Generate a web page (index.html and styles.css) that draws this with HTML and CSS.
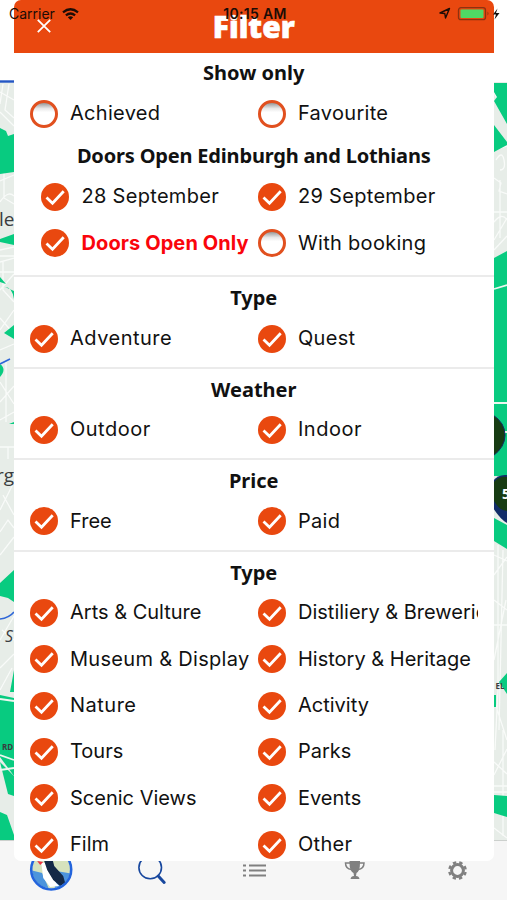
FILE: index.html
```html
<!DOCTYPE html>
<html lang="en">
<head>
<meta charset="utf-8">
<title>Filter</title>
<link rel="stylesheet" href="styles.css">
</head>
<body>
<div class="phone">
  <svg class="map" viewBox="0 0 507 900" aria-hidden="true">
    <rect y="82" width="507" height="758" fill="#e7ede8"/>
    <path d="M0 81.5H14" stroke="#2457c4" stroke-width="2.4"/>
    <g fill="none" stroke="#fbfdfb" stroke-width="1.300" opacity=".85">
      <path d="M0 92l14 8M3 84l-3 20M9 84l-4 26 9 8M0 112l14 14M0 181l14-6M4 172v26l10 6M0 202q8-12 14-6M0 250l14-3M0 256h14M0 262l14-4M0 272h14M0 290l14-16M3 262v28l11 12M0 330l14-20M0 318l14 16M0 350l14-6M0 382l14 22M0 402l14-16M6 362v60M0 420l14-8M0 447h14M8 447v12M0 510l14-28M3 495l11 20M0 532l8-12 6 8M0 555l14-18M0 640l14-24M0 668l14-14M2 630l12 10M0 690l12-22"/>
      <path d="M494 92l13 30M494 150l13-4M496 160q6-10 8 0t-4 10M494 178l7 5-2 8 8 3M494 212h13M500 180v58M494 240l13-22M494 222q8-10 13-2M494 250l13-14M494 555l13 6M494 575l13-18M498 545v140M503 550l-4 180M494 600l13 10M494 625h13M506 600l-12 60M494 700l13 40M498 690l-3 60M494 775l13-26M503 730v106M494 762l13 12M494 786h13M494 792h13M494 828l13 10"/>
    </g>
    <g fill="#08cb80">
      <path d="M0 128l6 3 2 5 6-2v38l-14 2z"/>
      <path d="M0 239l14-5v11l-14-3zM0 277l6 7-6-2zM5 287q7 0 9 12v-8zM4 333l10-8v14zM0 364q7 5 0 13zM9 424l5-2v2z"/>
      <path d="M0 583l14-13v32l-6-4-8-2zM14 670l-4 22h4zM0 695l14 3v78l-14-19z"/>
      <path d="M0 762l14 14v20l-6-2zM0 812l7 3 7 20v5H0z"/>
      <path d="M494 83h13v41l-13-23 3-4-3-5zM494 125l13 17v3l-13 7zM494 258l13-7v150h-13zM494 400h13v76h-13zM494 518l13 7v24l-13-8zM507 673l-8 9 8 12zM494 695h2v12h-2zM494 795l13 1v21l-13-4z"/>
    </g>
    <path d="M494 289l13-4M494 403h13M504 432h3M0 699l14 2M0 755l14 5M0 770l14-2" stroke="#eef6f0" stroke-width="1.800" fill="none"/>
    <path d="M0 364l10-5M0 619q9-1 14-7" stroke="#2f67d8" stroke-width="1.6" fill="none"/>
    <path d="M493 415q12 8 12 20t-12 21z" fill="#173c13" stroke="#112a62"/>
    <path d="M493 481q5-7 14-6v48q-6-3-14-15z" fill="#122d68"/>
    <path d="M494 482q5-6 13-5v34q-7 0-13-10z" fill="#173c13"/>
    <g class="map-text">
      <text x="-1" y="226" font-size="19">le</text>
      <text x="-4" y="482" font-size="19">rg</text>
      <text x="5" y="642" font-size="16" font-style="italic">S</text>
      <text x="2" y="750" font-size="8" font-weight="bold">RD</text>
      <text x="495.500" y="689" font-size="8" font-weight="bold">EL</text>
      <text x="502" y="499" font-size="14" font-weight="bold" class="pin-text">5</text>
    </g>
  </svg>

  <nav class="tabs">
    <svg class="tab" viewBox="0 0 101 60" aria-hidden="true">
      <clipPath id="disc"><circle cx="51" cy="29.500" r="19"/></clipPath>
      <circle cx="51" cy="29.500" r="21.500" fill="#fff"/>
      <g clip-path="url(#disc)">
        <path d="M30 8h44v44H30z" fill="#d6e2bd"/>
        <path d="M30 30l12 3 8 19H30zM56 31l18 3v20H54z" fill="#4c94dc"/>
        <path d="M41 22l6 2 9 19 3 3-9 1-7-9z" fill="#fff"/>
        <path d="M43 18h9l2 8 9 10 2 7-5 3-7-6-6-10z" fill="#142947"/>
        <path d="M37 21l6 1-3 3z" fill="#e34"/>
      </g>
      <circle cx="51" cy="29.500" r="20" fill="none" stroke="#2364dc" stroke-width="2.600"/>
    </svg>
    <svg class="tab" viewBox="101.500 0 101 60" aria-hidden="true"><g fill="none" stroke="#17479e"><circle cx="150.500" cy="27.500" r="11.300" stroke-width="1.600"/><path d="M158.500 36l6 6.500" stroke-width="3" stroke-linecap="round"/></g></svg>
    <svg class="tab" viewBox="203.200 0 101 60" aria-hidden="true"><path d="M243 25.500h3M243 30.500h3M243 35.500h3M249 25.500h17M249 30.500h17M249 35.500h17" stroke="#808080" stroke-width="1.900"/></svg>
    <svg class="tab" viewBox="304.200 0 101 60" aria-hidden="true"><path d="M349.500 21h10.500v2q0 8-3.500 10l-.5 3q3 0 3.500 3h-9q.5-3 3.500-3l-.5-3q-4-2-4-10z" fill="#808080"/><path d="M350 23h-4.500q0 6 6 6.500M359.500 23h4.500q0 6-6 6.500" fill="none" stroke="#808080" stroke-width="1.500"/></svg>
    <svg class="tab" viewBox="405.200 0 101 60" aria-hidden="true"><circle cx="456.500" cy="30.500" r="5.900" fill="none" stroke="#808080" stroke-width="3"/><circle cx="456.500" cy="30.500" r="8.200" fill="none" stroke="#808080" stroke-width="2.400" stroke-dasharray="3.400 3.040" stroke-dashoffset="-1.500"/></svg>
  </nav>

  <main class="sheet">
    <header class="bar">
      <svg class="close" viewBox="0 0 14 14"><path d="M.8.8l12.400 12.400M13.200.8L.8 13.200" stroke="#fff" stroke-width="1.800"/></svg>
      <h1 class="title">Filter</h1>
    </header>

    <section class="group first">
      <h2>Show only</h2>
      <div class="options">
        <div class="option"><i class="ring"></i><span>Achieved</span></div>
        <div class="option"><i class="ring"></i><span>Favourite</span></div>
      </div>
      <h2 class="event">Doors Open Edinburgh and Lothians</h2>
      <div class="options indented">
        <div class="option"><svg class="tick"><use href="#tick"/></svg><span>28 September</span></div>
        <div class="option"><svg class="tick"><use href="#tick"/></svg><span>29 September</span></div>
        <div class="option"><svg class="tick"><use href="#tick"/></svg><span class="alert">Doors Open Only</span></div>
        <div class="option"><i class="ring"></i><span>With booking</span></div>
      </div>
    </section>
    <section class="group">
      <h2>Type</h2>
      <div class="options">
        <div class="option"><svg class="tick"><use href="#tick"/></svg><span class="wide">Adventure</span></div>
        <div class="option"><svg class="tick"><use href="#tick"/></svg><span>Quest</span></div>
      </div>
    </section>
    <section class="group">
      <h2>Weather</h2>
      <div class="options">
        <div class="option"><svg class="tick"><use href="#tick"/></svg><span class="wide">Outdoor</span></div>
        <div class="option"><svg class="tick"><use href="#tick"/></svg><span class="wide">Indoor</span></div>
      </div>
    </section>
    <section class="group">
      <h2>Price</h2>
      <div class="options">
        <div class="option"><svg class="tick"><use href="#tick"/></svg><span class="tight">Free</span></div>
        <div class="option"><svg class="tick"><use href="#tick"/></svg><span>Paid</span></div>
      </div>
    </section>
    <section class="group">
      <h2>Type</h2>
      <div class="options">
        <div class="option"><svg class="tick"><use href="#tick"/></svg><span class="tight">Arts &amp; Culture</span></div>
        <div class="option"><svg class="tick"><use href="#tick"/></svg><span class="tight">Distiliery &amp; Breweries</span></div>
        <div class="option"><svg class="tick"><use href="#tick"/></svg><span>Museum &amp; Display</span></div>
        <div class="option"><svg class="tick"><use href="#tick"/></svg><span class="tight">History &amp; Heritage</span></div>
        <div class="option"><svg class="tick"><use href="#tick"/></svg><span class="wide">Nature</span></div>
        <div class="option"><svg class="tick"><use href="#tick"/></svg><span class="tight">Activity</span></div>
        <div class="option"><svg class="tick"><use href="#tick"/></svg><span class="tight">Tours</span></div>
        <div class="option"><svg class="tick"><use href="#tick"/></svg><span class="tight">Parks</span></div>
        <div class="option"><svg class="tick"><use href="#tick"/></svg><span class="tight">Scenic Views</span></div>
        <div class="option"><svg class="tick"><use href="#tick"/></svg><span class="tight">Events</span></div>
        <div class="option"><svg class="tick"><use href="#tick"/></svg><span class="tight">Film</span></div>
        <div class="option"><svg class="tick"><use href="#tick"/></svg><span>Other</span></div>
      </div>
    </section>
  </main>

  <div class="status">
    <div class="carrier"><span>Carrier</span>
      <svg class="wifi" viewBox="0 0 17 12"><g fill="none" stroke="#1c0c06" stroke-width="2.300"><path d="M1 4.300q7.500-6 15 0M3.900 7.300q4.600-3.700 9.200 0"/></g><path d="M5.800 9.300q2.700-2 5.400 0L8.500 12z" fill="#1c0c06"/></svg>
    </div>
    <span class="clock">10:15 AM</span>
    <svg class="power" viewBox="0 0 64 16"><path d="M2 7l9.500-4.500L7.500 12 6.800 7.500z" fill="none" stroke="#1c0c06" stroke-width="1.400" stroke-linejoin="round"/><rect x="20.500" y="1.700" width="27" height="12" rx="2.500" fill="none" stroke="#8c3210" stroke-width="1.300"/><rect x="22.500" y="3.500" width="23" height="8.500" rx="1" fill="#4fd964"/><path d="M49.500 5.500q2 2 0 4z" fill="#8c3210"/><path d="M59.500 2.500l-4.500 6h3l-1.500 5 5-6.500h-3.500z" fill="#111"/></svg>
  </div>
</div>

<svg class="defs" width="0" height="0">
  <symbol id="tick" viewBox="0 0 28 28"><circle cx="14" cy="14" r="14" fill="#e9480f"/><path d="M5.500 14.500l6 5.700L22.700 8.300" fill="none" stroke="#fff" stroke-width="2.800"/></symbol>
</svg>
</body>
</html>
```

FILE: styles.css
```css
* { box-sizing: border-box; }
body { margin: 0; background: #fff; overflow: hidden; }
.defs { position: absolute; }

.phone {
  position: relative;
  width: 507px;
  height: 900px;
  overflow: hidden;
  color: #111;
  font-family: Inter, "Liberation Sans", sans-serif;
}
.map { position: absolute; inset: 0; width: 507px; height: 900px; }
.map-text { font-family: "Open Sans", sans-serif; fill: #3a3d3f; }
.map-text .pin-text { fill: #fff; }

.tabs {
  position: absolute;
  left: 0;
  right: 0;
  bottom: 0;
  height: 60px;
  display: flex;
  background: #f6f6f6;
  border-top: 1px solid #ccd0cd;
}
.tab { flex: 1; height: 60px; margin-top: -1px; min-width: 0; }

.sheet {
  position: relative;
  margin: 0 13px 0 13.5px;
  height: 861px;
  overflow: hidden;
  background: #fff;
  border-radius: 7px;
}
.bar {
  position: relative;
  height: 53.400px;
  background: #e9480f;
  display: flex;
  justify-content: center;
}
.close { position: absolute; left: 23px; top: 18.500px; width: 14px; height: 14px; }
.title {
  margin: 7px 0 0;
  color: #fff;
  font: 900 30px/40px "Noto Sans", sans-serif;
  -webkit-text-stroke: .6px #fff;
}

.group {
  border-top: 2px solid #ebebeb;
  padding: 1px 16px 5px;
}
.group.first { border: 0; padding: 0 16px 8.800px; }
h2 {
  margin: 0;
  height: 37px;
  padding-top: 6px;
  text-align: center;
  font: 700 20px/28px "Noto Sans", sans-serif;
}
.event { letter-spacing: -.18px; padding-top: 5.500px; }
.options { display: grid; grid-template-columns: 228px 220.500px; grid-auto-rows: 46.400px; }
.option {
  display: flex;
  align-items: center;
  gap: 12.500px;
  overflow: hidden;
  white-space: nowrap;
  font-size: 20px;
  letter-spacing: .3px;
}
.wide { letter-spacing: .5px; }
.tight { letter-spacing: 0; }
.indented .option:nth-child(odd) { padding-left: 11.500px; }
.option span { position: relative; top: -.500px; }
.tick, .ring { flex: none; width: 28px; height: 28px; }
.ring {
  border: 3px solid #e1501f;
  border-radius: 50%;
  background: linear-gradient(#999, #e8e8e8 25%, #fff 42%);
}
.option .alert { color: #fa050b; font-weight: 700; letter-spacing: .1px; }

.status {
  position: absolute;
  left: 0;
  right: 0;
  top: 0;
  height: 27px;
  display: grid;
  grid-template-columns: 1fr auto 1fr;
  align-items: center;
  color: #1c0c06;
  font-size: 14px;
}
.carrier { display: flex; align-items: center; gap: 7px; padding-left: 9px; }
.wifi { width: 17px; height: 12px; }
.clock { font-weight: 600; letter-spacing: .3px; padding-left: 3px; }
.power { width: 64px; height: 16px; justify-self: end; margin-right: 5px; }
```
